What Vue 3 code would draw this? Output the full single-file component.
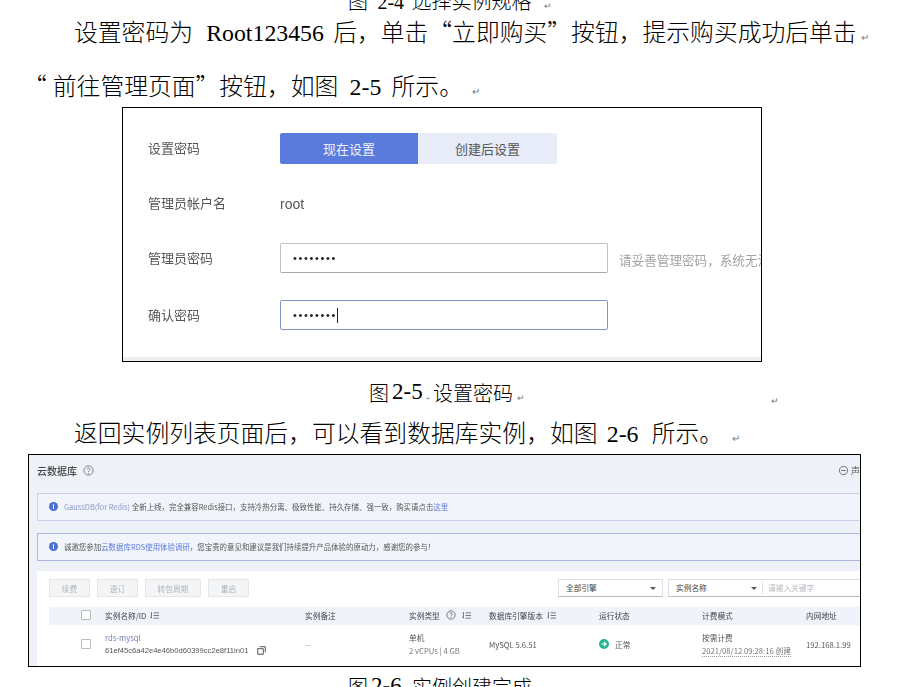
<script setup>
const columns = [
  { label: '实例名称/ID', sort: true },
  { label: '实例备注' },
  { label: '实例类型', help: true, sort: true },
  { label: '数据库引擎版本', sort: true },
  { label: '运行状态' },
  { label: '计费模式' },
  { label: '内网地址' }
]
const tools = ['续费', '退订', '转包周期', '重启']
</script>

<template>
  <div class="page" lang="zh-CN">
    <p class="caption first">图 <span class="latin">2-4</span> 选择实例规格<i class="mark">↵</i></p>
    <p class="para one">设置密码为 <span class="latin">&nbsp;Root123456</span> 后，单击“立即购买”按钮，提示购买成功后单击<i class="mark">↵</i></p>
    <p class="para two"><span class="open">“</span>前往管理页面”按钮，如图 <span class="latin">&nbsp;2-5</span> 所示。 <i class="mark">↵</i></p>

    <section class="shot-a">
      <div class="form">
        <div class="row r1">
          <label>设置密码</label>
          <div class="toggle"><span class="on">现在设置</span><span class="off">创建后设置</span></div>
        </div>
        <div class="row r2">
          <label>管理员帐户名</label>
          <span class="value">root</span>
        </div>
        <div class="row r3">
          <label>管理员密码</label>
          <div class="input">••••••••</div>
          <span class="hint">请妥善管理密码，系统无法获取您设置的密码内容</span>
        </div>
        <div class="row r4">
          <label>确认密码</label>
          <div class="input focus">••••••••<b class="caret"></b></div>
        </div>
      </div>
      <div class="stripe"></div>
    </section>

    <p class="caption second">图<span class="latin big">2-5</span><i class="tiny">+</i>设置密码<i class="mark">↵</i><i class="mark far">↵</i></p>
    <p class="para three">返回实例列表页面后，可以看到数据库实例，如图 <span class="latin">&nbsp;2-6</span> 所示。 <i class="mark">↵</i></p>

    <section class="shot-b">
      <div class="console">
        <header class="head">
          <div class="title">云数据库
            <svg class="help" viewBox="0 0 12 12"><circle cx="6" cy="6" r="5" fill="none" stroke="#777" /><path d="M4.5 4.8a1.5 1.5 0 1 1 2.3 1.3c-.6.4-.8.6-.8 1.2M6 8.6v1" fill="none" stroke="#777" /></svg>
          </div>
          <div class="feedback">
            <svg viewBox="0 0 12 12"><circle cx="6" cy="6" r="4.5" fill="none" stroke="#666" /><path d="M3.5 6h5" stroke="#666" /></svg>声
          </div>
        </header>

        <div class="alert a1">
          <span class="info">i</span>
          <span><em class="soft">GaussDB(for Redis)</em> 全新上线，完全兼容Redis接口，支持冷热分离、极致性能、持久存储、强一致，购买请点击<em>这里</em></span>
        </div>
        <div class="alert a2">
          <span class="info">i</span>
          <span>诚邀您参加<em>云数据库RDS使用体验调研</em>，您宝贵的意见和建议是我们持续提升产品体验的原动力，感谢您的参与！</span>
        </div>

        <div class="panel">
          <div class="toolbar">
            <button v-for="t in tools" :key="t" type="button">{{ t }}</button>
            <div class="filters">
              <div class="select s1">全部引擎<i class="arrow"></i></div>
              <div class="select s2">实例名称<i class="arrow"></i><span class="search">请输入关键字</span></div>
            </div>
          </div>

          <div class="grid thead">
            <div class="check"><i class="box"></i></div>
            <div v-for="c in columns" :key="c.label" class="th">
              {{ c.label }}
              <svg v-if="c.help" class="q" viewBox="0 0 12 12"><circle cx="6" cy="6" r="5" fill="none" stroke="#666" /><path d="M4.5 4.8a1.5 1.5 0 1 1 2.3 1.3c-.6.4-.8.6-.8 1.2M6 8.6v1" fill="none" stroke="#666" /></svg>
              <svg v-if="c.sort" class="sort" viewBox="0 0 10 8"><path d="M1.5 0v7M.3 5.6l1.2 1.4M4 1h6M4 4h6M4 7h6" fill="none" stroke="#555" stroke-width=".9" /></svg>
            </div>
          </div>

          <div class="grid tbody">
            <div class="check"><i class="box"></i></div>
            <div class="cell">
              <div class="link">rds-mysql</div>
              <div class="id">61ef45c6a42e4e46b0d60399cc2e8f11in01
                <svg class="copy" viewBox="0 0 10 10"><path d="M3 .8h6.2V7M.8 3h6.2v6.2H.8z" fill="none" stroke="#444" /></svg>
              </div>
            </div>
            <div class="cell dash">--</div>
            <div class="cell"><div>单机</div><div class="sub">2 vCPUs | 4 GB</div></div>
            <div class="cell">MySQL 5.6.51</div>
            <div class="cell status">
              <svg viewBox="0 0 10 10"><circle cx="5" cy="5" r="5" fill="#27b58e" /><path d="M2.5 5h4M5 3l2 2-2 2" fill="none" stroke="#fff" stroke-width="1.2" /></svg>
              正常
            </div>
            <div class="cell"><div>按需计费</div><div class="sub dotted">2021/08/12 09:28:16 创建</div></div>
            <div class="cell">192.168.1.99</div>
          </div>
        </div>
      </div>
    </section>

    <p class="caption third">图<span class="latin big">2-6</span><i class="tiny">+</i>实例创建完成<i class="mark">↵</i></p>
  </div>
</template>

<style>
html, body { margin: 0; background: #fff; }
</style>

<style scoped>
.page {
  width: 922px;
  height: 687px;
  overflow: hidden;
  display: flex;
  flex-direction: column;
  align-items: flex-start;
  background: #fff;
  color: #000;
  font-family: "Noto Sans CJK SC", "Liberation Sans", sans-serif;
  font-weight: 300;
}
.page > * { flex: none; }
p { margin: 0; white-space: nowrap; }
i, em { font-style: normal; }
.latin { font-family: "Liberation Serif", serif; font-weight: 400; }
.mark { font-family: "DejaVu Sans", sans-serif; font-size: 9px; color: #777; margin-left: 4px; }

.caption { font-size: 20px; line-height: 22px; height: 22px; }
.caption .latin { font-size: 20px; margin: 0 3px 0 5px; }
.caption .big { font-size: 23px; letter-spacing: 0; margin: 0; position: relative; top: -2px; margin-left: 3px; }
.tiny { font-size: 8px; color: #777; margin: 0 3px; }
.first { margin: -10px 0 0 348px; }
.first .mark { margin-left: 12px; }
.para { font-size: 23.8px; line-height: 26px; height: 26px; }
.para .latin { font-size: 23.8px; }
.para .mark { font-size: 10px; }
.one { margin: 6px 0 0 74px; }
.one .latin { margin: 0 4px 0 2px; }
.two { margin: 28px 0 0 23px; }
.two .latin { margin-right: 5px; }
.open { letter-spacing: 6px; }

.shot-a {
  box-sizing: border-box;
  width: 640px;
  height: 255px;
  margin: 9px 0 0 122px;
  border: 1px solid #000;
  overflow: hidden;
  display: flex;
  flex-direction: column;
}
.form { flex: 1; filter: blur(.4px); color: #555; font-size: 13px; font-weight: 400; padding-left: 25px; }
.row { display: flex; align-items: center; white-space: nowrap; }
.row label { width: 132px; flex: none; padding-bottom: 2px; }
.r1 { margin-top: 25px; height: 31px; }
.r2 { margin-top: 25px; height: 31px; }
.r2 label { padding-bottom: 5px; }
.r3 { margin-top: 23px; height: 30px; }
.r4 { margin-top: 27px; height: 30px; }
.toggle { display: flex; width: 277px; height: 31px; line-height: 31px; text-align: center; border-radius: 2px; overflow: hidden; }
.on { width: 138px; background: #5b7bdc; color: #eef1fb; }
.off { flex: 1; background: #e8ecf8; color: #555; }
.value { font-family: "Liberation Sans", sans-serif; font-size: 14px; padding-bottom: 2px; }
.input {
  box-sizing: border-box;
  width: 328px;
  height: 30px;
  flex: none;
  padding-left: 12px;
  font-family: "Liberation Sans", sans-serif;
  font-size: 11px;
  letter-spacing: 1.65px;
  color: #222;
  border: 1px solid #c2c2c2;
  border-bottom-color: #aaa;
  border-radius: 2px;
  background: #fff;
  display: flex;
  align-items: center;
}
.focus { border-color: #7f93c4; }
.caret { display: block; width: 1px; height: 15px; background: #222; }
.hint { margin: 3px 0 0 11px; color: #a3a3a3; font-size: 12.6px; }
.stripe { height: 4px; flex: none; background: #eeeeee; }

.second { margin: 18px 0 0 369px; height: 25px; line-height: 25px; }
.far { margin-left: 246px; position: relative; top: 3px; }
.three { margin: 14px 0 0 74px; }
.three .latin { margin: 0 8px 0 -2px; }

.shot-b {
  box-sizing: border-box;
  width: 833px;
  height: 213px;
  margin: 9px 0 0 28px;
  border: 1px solid #000;
  overflow: hidden;
  background: #eef1f7;
}
.console { filter: blur(.5px); color: #555; font-size: 7.7px; font-weight: 400; height: 100%; }
.head { display: flex; justify-content: space-between; align-items: center; height: 31px; padding: 0 0 0 8px; }
.title { display: flex; align-items: center; gap: 6px; font-size: 10px; font-weight: 500; color: #444; }
.help { width: 11px; height: 11px; }
.feedback { display: flex; align-items: center; gap: 2px; font-size: 9px; width: 22px; overflow: hidden; flex: none; }
.feedback svg { width: 11px; height: 11px; flex: none; }
.alert {
  box-sizing: border-box;
  display: flex;
  align-items: center;
  gap: 6px;
  height: 28px;
  margin-left: 8px;
  padding: 0 0 2px 11px;
  font-size: 7.45px;
  background: #f2f4fb;
  border: 1px solid #c9d2ec;
  border-right: 0;
  white-space: nowrap;
}
.a1 { margin-top: 7px; }
.a2 { margin-top: 12px; border-color: #aab7e3; }
.alert em { color: #5b7bdc; }
.alert em.soft { color: #8c9bc6; }
.info {
  width: 9px; height: 9px; flex: none;
  border-radius: 50%;
  background: #4d6fd0;
  color: #fff;
  font: 700 7px/9px "Liberation Sans", sans-serif;
  text-align: center;
}
.panel { margin: 10px 0 0 8px; background: #fff; padding: 8px 0 0 12px; box-sizing: border-box; height: 96px; }
.toolbar { display: flex; gap: 7px; height: 18px; }
button {
  flex: none; height: 18px; padding: 0; border: 1px solid #e4e6ea; background: #f4f5f7; color: #b0b3b8;
  font: 400 7.7px "Noto Sans CJK SC", sans-serif; width: 41px; white-space: nowrap;
}
button:nth-of-type(3) { width: 56px; }
.filters { display: flex; gap: 5px; margin-left: 302px; flex: none; }
.select {
  box-sizing: border-box; height: 18px; line-height: 16px; padding-left: 7px; flex: none;
  border: 1px solid #dcdfe6; border-bottom-color: #bbb; position: relative; color: #444; background: #fff; white-space: nowrap;
}
.s1 { width: 105px; }
.s2 { width: 300px; }
.arrow { position: absolute; top: 7px; width: 0; height: 0; border: 3px solid transparent; border-top: 3px solid #555; }
.s1 .arrow { right: 6px; }
.s2 .arrow { left: 82px; }
.search { position: absolute; left: 99px; color: #bbb; }
.search::before { content: ""; position: absolute; left: -6px; top: 2px; height: 12px; border-left: 1px solid #e3e3e3; }

.grid { display: grid; grid-template-columns: 56px 200px 104px 80px 110px 103px 104px 200px; align-items: center; white-space: nowrap; }
.thead { margin-top: 10px; height: 18px; padding-bottom: 2px; box-sizing: border-box; background: #f0f3fa; color: #444; }
.tbody { height: 40px; padding-bottom: 2px; box-sizing: border-box; }
.th { display: flex; align-items: center; gap: 4px; }
.check { padding-left: 32px; display: flex; align-items: center; }
.box { display: block; box-sizing: border-box; width: 10px; height: 10px; border: 1px solid #bbb; border-radius: 1px; background: #fff; }
.q { width: 10px; height: 10px; margin: 0 2px; }
.sort { width: 9px; height: 7px; }
.cell { line-height: 13px; }
.link { color: #7a83b8; }
.id { display: flex; align-items: center; gap: 9px; font-family: "Liberation Sans", sans-serif; font-size: 7.6px; color: #555; }
.copy { width: 9px; height: 9px; flex: none; }
.sub { color: #777; }
.dotted { border-bottom: 1px dotted #999; display: inline-block; line-height: 11px; }
.dash { color: #888; }
.status { display: flex; align-items: center; gap: 6px; }
.status svg { width: 10px; height: 10px; }

.third { margin: 7px 0 0 348px; height: 25px; line-height: 25px; }
.third .mark { margin-left: 12px; }
</style>
